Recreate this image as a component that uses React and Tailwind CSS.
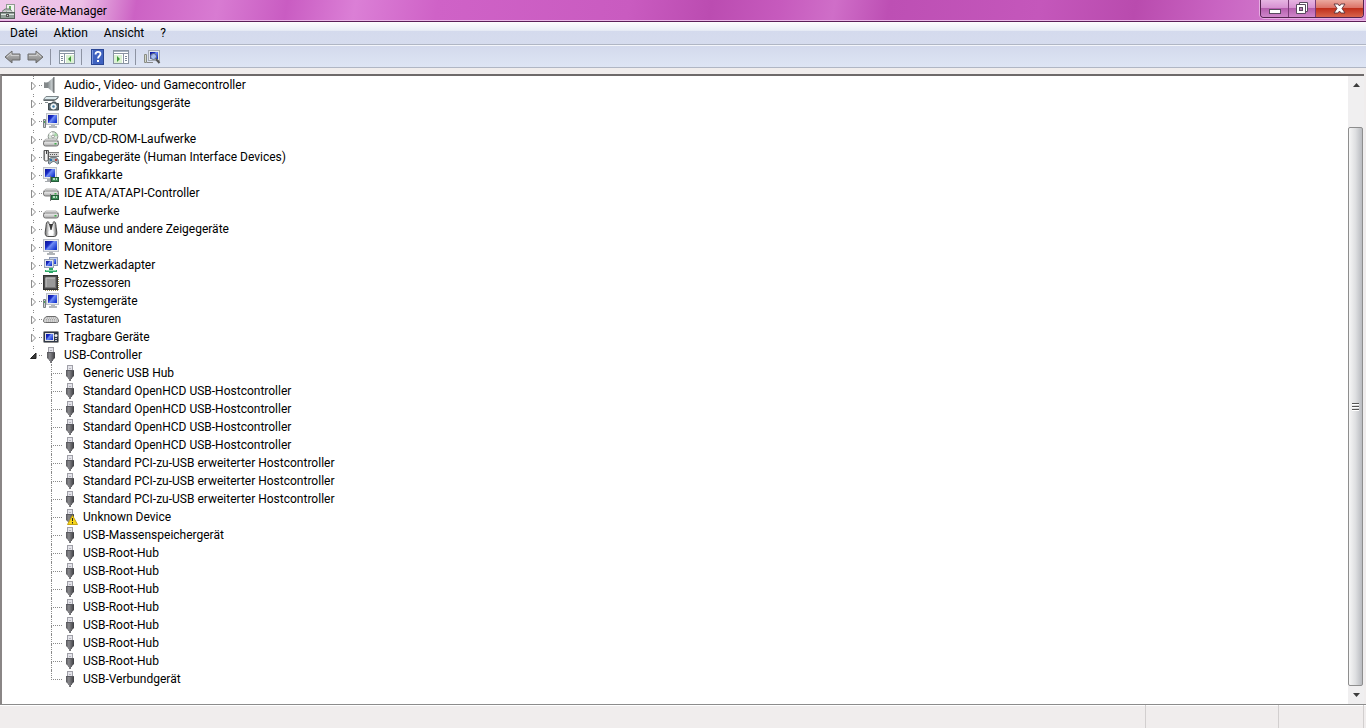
import React, { useState } from 'react';

const categories = [
  { name: 'Audio-, Video- und Gamecontroller', icon: 'audio' },
  { name: 'Bildverarbeitungsgeräte', icon: 'imaging' },
  { name: 'Computer', icon: 'computer' },
  { name: 'DVD/CD-ROM-Laufwerke', icon: 'dvd' },
  { name: 'Eingabegeräte (Human Interface Devices)', icon: 'hid' },
  { name: 'Grafikkarte', icon: 'display' },
  { name: 'IDE ATA/ATAPI-Controller', icon: 'ide' },
  { name: 'Laufwerke', icon: 'drive' },
  { name: 'Mäuse und andere Zeigegeräte', icon: 'mouse' },
  { name: 'Monitore', icon: 'monitor' },
  { name: 'Netzwerkadapter', icon: 'network' },
  { name: 'Prozessoren', icon: 'cpu' },
  { name: 'Systemgeräte', icon: 'computer' },
  { name: 'Tastaturen', icon: 'keyboard' },
  { name: 'Tragbare Geräte', icon: 'portable' },
  {
    name: 'USB-Controller',
    icon: 'usb',
    devices: [
      { name: 'Generic USB Hub' },
      { name: 'Standard OpenHCD USB-Hostcontroller' },
      { name: 'Standard OpenHCD USB-Hostcontroller' },
      { name: 'Standard OpenHCD USB-Hostcontroller' },
      { name: 'Standard OpenHCD USB-Hostcontroller' },
      { name: 'Standard PCI-zu-USB erweiterter Hostcontroller' },
      { name: 'Standard PCI-zu-USB erweiterter Hostcontroller' },
      { name: 'Standard PCI-zu-USB erweiterter Hostcontroller' },
      { name: 'Unknown Device', warning: true },
      { name: 'USB-Massenspeichergerät' },
      { name: 'USB-Root-Hub' },
      { name: 'USB-Root-Hub' },
      { name: 'USB-Root-Hub' },
      { name: 'USB-Root-Hub' },
      { name: 'USB-Root-Hub' },
      { name: 'USB-Root-Hub' },
      { name: 'USB-Root-Hub' },
      { name: 'USB-Verbundgerät' },
    ],
  },
];

const Gradients = () => (
  <svg className="absolute h-0 w-0" aria-hidden="true">
    <defs>
      <linearGradient id="screen" x1="0" y1="0" x2="1" y2="0.7">
        <stop offset="0" stopColor="#0a1490" />
        <stop offset="0.4" stopColor="#1a2cc8" />
        <stop offset="0.55" stopColor="#6f8cf4" />
        <stop offset="1" stopColor="#1838d0" />
      </linearGradient>
      <linearGradient id="metal" x1="0" y1="0" x2="0" y2="1">
        <stop offset="0" stopColor="#f6f6f6" />
        <stop offset="1" stopColor="#a9a9a9" />
      </linearGradient>
      <linearGradient id="plug" x1="0" y1="0" x2="1" y2="0">
        <stop offset="0" stopColor="#58585c" />
        <stop offset="0.35" stopColor="#88888c" />
        <stop offset="1" stopColor="#3c3c40" />
      </linearGradient>
      <linearGradient id="cone" x1="0" y1="0" x2="1" y2="0">
        <stop offset="0" stopColor="#7c8284" />
        <stop offset="0.7" stopColor="#c4cacc" />
        <stop offset="1" stopColor="#6c7072" />
      </linearGradient>
      <linearGradient id="mouseBody" x1="0" y1="0" x2="1" y2="0">
        <stop offset="0" stopColor="#6c6c6c" />
        <stop offset="0.35" stopColor="#f4f4f4" />
        <stop offset="0.65" stopColor="#f4f4f4" />
        <stop offset="1" stopColor="#606060" />
      </linearGradient>
      <linearGradient id="arrow" x1="0" y1="0" x2="0" y2="1">
        <stop offset="0" stopColor="#c4c4c4" />
        <stop offset="1" stopColor="#7e7e7e" />
      </linearGradient>
    </defs>
  </svg>
);

const Drive = ({ y = 7 }) => (
  <g>
    <path d={`M3 ${y}h10l3 2.5H0z`} fill="#ececec" stroke="#9a9a9a" strokeWidth="0.7" />
    <rect x="0.5" y={y + 2} width="15" height="5" rx="2" fill="url(#metal)" stroke="#777" />
    <rect x="11.5" y={y + 4} width="2" height="1.5" fill="#3fae4a" />
  </g>
);

const Card = () => (
  <g>
    <rect x="8.5" y="10.5" width="7" height="4" fill="#3c8f58" stroke="#245c38" />
    <rect x="10" y="11" width="2" height="2" fill="#b8dcc0" />
    <rect x="13" y="11" width="1" height="2" fill="#b8dcc0" />
    <path d="M7.5 9v7" stroke="#777" />
  </g>
);

const icons = {
  audio: (
    <g>
      <path d="M1 5h4v6H1z" fill="#85898b" />
      <path d="M4 6L11 0v16l-7-6z" fill="url(#cone)" />
      <path d="M1.5 5.5h3" stroke="#b8bcbe" />
      <path d="M11 0v16" stroke="#6a6e70" />
    </g>
  ),
  imaging: (
    <g>
      <path d="M.5 4.5L3 1.5h12.5L13 4.5z" fill="#dce9ec" stroke="#7e878b" />
      <path d="M.5 5.5h11l4-3" fill="none" stroke="#5e6669" />
      <path d="M5.5 8.5h3l1-1.5h3l1 1.5h2V15h-10z" fill="#5a6a72" stroke="#414b50" />
      <circle cx="10.5" cy="11.5" r="2.6" fill="#e6f1f6" stroke="#fff" />
      <circle cx="10.5" cy="11.5" r="1.2" fill="#3d78a0" />
      <path d="M2 7.5h3" stroke="#80898c" />
    </g>
  ),
  computer: (
    <g>
      <path d="M.5 6.5h2v8h-2z" fill="#c8ccd0" stroke="#7b8084" />
      <path d="M1 9h1" stroke="#4aa35a" strokeWidth="2" />
      <rect x="3.5" y="0.5" width="12" height="11" fill="#e8eaec" stroke="#bcc0c6" />
      <rect x="5" y="2" width="9" height="8" fill="url(#screen)" />
      <path d="M8 12h4v1h2v2H6v-2h2z" fill="#b4b8bc" />
    </g>
  ),
  dvd: (
    <g>
      <circle cx="10" cy="5.5" r="4.8" fill="#dbe6dc" stroke="#8a928b" />
      <path d="M10 5.5L12.5 1.5A5 5 0 0 1 14.5 5z" fill="#a8d8a8" />
      <path d="M10 5.5L6 3a5 5 0 0 1 3-2z" fill="#fff" />
      <circle cx="10" cy="5.5" r="1.4" fill="#fff" stroke="#888" strokeWidth="0.8" />
      <Drive y={8} />
    </g>
  ),
  hid: (
    <g>
      <path d="M1 1.5h4.5v9c0 2-4.5 2-4.5 0z" fill="url(#mouseBody)" stroke="#555" />
      <path d="M3.5 1v4" stroke="#444" />
      <path d="M6 3.5h10v4H6z" fill="#d8d8d8" />
      <path d="M6 3.5h10M6 7.5h10" stroke="#7e7e7e" />
      <path d="M7 5.5h8" stroke="#555" strokeDasharray="1 1" />
      <path d="M5.5 14.5c0-6 2-6 5-6s5 0 5 6c-2 1.5-2.5-2-5-2s-3 3.5-5 2z" fill="#a4b4bc" stroke="#59656c" />
      <rect x="7" y="10" width="2" height="2" fill="#2f75b0" />
      <rect x="12" y="10" width="2" height="2" fill="#b44" />
    </g>
  ),
  display: (
    <g>
      <rect x="0.5" y="0.5" width="13" height="11" fill="#e8eaec" stroke="#bcc0c6" />
      <rect x="2" y="2" width="10" height="8" fill="url(#screen)" />
      <path d="M4 12h3v3H2v-1h2z" fill="#a8acb0" />
      <Card />
    </g>
  ),
  ide: (
    <g>
      <Drive y={4} />
      <Card />
    </g>
  ),
  drive: <Drive y={8} />,
  mouse: (
    <g>
      <path
        d="M3.5 2C4.5 0 6 0 6 3l1 1h2l1-1c0-3 1.5-3 2.5-1 .6 2 .4 4 1 7 .7 3.5.5 6-2 6.500h-7c-2.500-.5-2.700-3-2-6.500.6-3 .4-5 1-7z"
        fill="url(#mouseBody)"
        stroke="#4b4b4b"
      />
      <path d="M6 3l1.5 6h1L10 3z" fill="#3a3a3a" />
      <ellipse cx="8" cy="11.5" rx="2.5" ry="2.5" fill="#fff" />
    </g>
  ),
  monitor: (
    <g>
      <rect x="0.5" y="0.5" width="15" height="12" fill="#e8eaec" stroke="#bcc0c6" />
      <rect x="2" y="2" width="12" height="9" fill="url(#screen)" />
      <path d="M6 13h4v1h2v2H4v-2h2z" fill="#b0b4b8" />
    </g>
  ),
  network: (
    <g>
      <rect x="6.5" y="0.5" width="8" height="8" fill="#c8d4ec" stroke="#8c98b4" />
      <rect x="8" y="2" width="5" height="5" fill="url(#screen)" />
      <rect x="1.5" y="2.5" width="9" height="8" fill="#dde3ee" stroke="#98a2b4" />
      <rect x="3" y="4" width="6" height="5" fill="url(#screen)" />
      <path d="M6 11h4v2h4v2h-4v1H6v-1H2v-2h4z" fill="#2fa868" />
      <path d="M3 13.5h10" stroke="#8fdcb0" />
    </g>
  ),
  cpu: (
    <g>
      <path d="M2 15.5h14M15.5 2v14" stroke="#9a9258" strokeDasharray="1 1" />
      <rect x="0.5" y="0.5" width="14" height="14" fill="#4c4c4c" stroke="#333" />
      <rect x="2.5" y="2.5" width="10" height="10" fill="#9a9a9a" stroke="#777" />
      <path d="M3 12V3h9" fill="none" stroke="#c6c6c6" />
    </g>
  ),
  keyboard: (
    <g>
      <path d="M4 5.5h8c2 0 3.5 3 3.5 4.5s-1 1.5-2 1.5h-11c-1 0-2 0-2-1.5S2 5.5 4 5.5z" fill="#d4d4d4" stroke="#6c6c6c" />
      <path d="M4 7h9M3 8.5h10.5M3 10h11" stroke="#a4a4a4" strokeDasharray="1 1" />
    </g>
  ),
  portable: (
    <g>
      <rect x="0.5" y="2.5" width="15" height="11" rx="1" fill="#303848" stroke="#8c8c8c" />
      <rect x="2.5" y="4.5" width="8" height="7" fill="url(#screen)" stroke="#e4e4e4" />
      <circle cx="13" cy="6.5" r="1.5" fill="#eee" />
      <path d="M12 9.5h2M12 11.5h2" stroke="#ccc" />
    </g>
  ),
  usb: (
    <g>
      <rect x="5.5" y="0.5" width="5" height="5" fill="#e4e4ea" stroke="#a0a0a8" />
      <path d="M7 3.5h2" stroke="#b4b4bc" />
      <path d="M4 5h8v6l-2 2v1H9v2H7v-2H6v-1l-2-2z" fill="url(#plug)" />
      <path d="M4 5.5h8" stroke="#5a5a60" />
    </g>
  ),
};

const DeviceIcon = ({ type, warning }) => (
  <svg viewBox="0 0 16 16" className="h-4 w-4 shrink-0" aria-hidden="true">
    {icons[type]}
    {warning && (
      <g>
        <path d="M10.5 6.5l5 9h-10z" fill="#f6d61c" stroke="#c8a410" strokeLinejoin="round" />
        <path d="M10.5 9v3M10.5 13v1.500" stroke="#222" />
      </g>
    )}
  </svg>
);

const Device = ({ device, last }) => (
  <li className="flex h-[18px] items-center pl-[49px]">
    <span className="flex h-full w-[11px] flex-col">
      <span className="h-[10px] w-full border-b border-l border-dotted border-[#8a8a8a]" />
      {!last && <span className="flex-1 border-l border-dotted border-[#8a8a8a]" />}
    </span>
    <DeviceIcon type="usb" warning={device.warning} />
    <span className="pl-[5px] whitespace-nowrap">{device.name}</span>
  </li>
);

const Category = ({ category }) => {
  const [open, setOpen] = useState(!!category.devices);

  return (
    <li>
      <div className="flex h-[18px] items-center pl-[27px]">
        <button
          className="flex h-full w-[9px] flex-col items-center"
          aria-label={category.name}
          aria-expanded={open}
          onClick={() => setOpen(!open)}
        >
          <span className="mb-0.5 h-[3px] border-l border-dotted border-[#8a8a8a]" />
          <svg viewBox="0 0 9 9" className="h-[9px] w-[9px]">
            {open ? (
              <path d="M7 2v5.5H1.5z" fill="#3a3a3a" stroke="#222" />
            ) : (
              <path d="M2.5 1L6.500 5l-4 4z" fill="#fff" stroke="#8c8c8c" />
            )}
          </svg>
        </button>
        <span className="mx-px w-[3px] border-b border-dotted border-[#8a8a8a]" />
        <DeviceIcon type={category.icon} />
        <span className="pl-[5px] whitespace-nowrap">{category.name}</span>
      </div>
      {open && category.devices && (
        <ul>
          {category.devices.map((device, i) => (
            <Device key={i} device={device} last={i === category.devices.length - 1} />
          ))}
        </ul>
      )}
    </li>
  );
};

const TitleBar = () => (
  <header className="flex h-[22px] items-start border-b border-[#5c1f58] bg-[linear-gradient(100deg,#eec9ea_0%,#ecbfe6_6%,#cc62c4_10%,#d87bd2_16%,#c95cc2_21%,#db7fd6_26%,#cf62c7_32%,#c95bc0_46%,#bb4cb1_52%,#c65abd_57%,#cf6ec8_61%,#bd4fb4_65%,#c457bb_76%,#b94bae_83%,#c964c2_89%,#dc94d8_100%)] shadow-[inset_0_-1px_0_#e9b6e6]">
    <svg viewBox="0 0 16 16" className="mt-1 h-4 w-4" aria-hidden="true">
      <rect x="6.5" y="0.5" width="8" height="9" fill="#f2f4f0" stroke="#8f9a90" />
      <path d="M10 2v5" stroke="#65ad60" strokeWidth="2" />
      <path d="M2 7.5L5 5h5l2 2.5" fill="#b9c2bd" stroke="#6e7872" />
      <rect x="0.5" y="8.5" width="14" height="6" fill="#93a099" stroke="#56605a" />
      <path d="M1 10.5h13" stroke="#dfe6e2" />
      <rect x="6.5" y="10.5" width="2" height="2" fill="#dcdcdc" stroke="#555" />
    </svg>
    <h1 className="flex-1 pt-0.5 pl-[5px] leading-[18px]">Geräte-Manager</h1>
    <div className="mr-0.5 flex h-[18px] overflow-hidden rounded-b-[4px] border border-t-0 border-[#54234f] shadow-[0_0_0_1px_#e7aee3]">
      <button
        aria-label="Minimieren"
        className="flex w-7 items-center justify-center border-r border-[#7a3b76] bg-[linear-gradient(#e6b5e2_0%,#d792d2_45%,#b55fae_50%,#cf86ca_100%)]"
      >
        <svg viewBox="0 0 13 13" className="h-[13px] w-[13px]">
          <rect x="1.5" y="7.5" width="11" height="4" fill="#fff" stroke="#5a4a60" />
        </svg>
      </button>
      <button
        aria-label="Verkleinern"
        className="flex w-[27px] items-center justify-center border-r border-[#7a3b76] bg-[linear-gradient(#e6b5e2_0%,#d792d2_45%,#b55fae_50%,#cf86ca_100%)]"
      >
        <svg viewBox="0 0 13 13" className="h-[13px] w-[13px]">
          <path d="M3.5.5h8v9h-8z" fill="#fff" stroke="#5a4a60" />
          <path d="M.5 2.5h9v9h-9z" fill="#fff" stroke="#5a4a60" />
          <rect x="3.5" y="5.5" width="3" height="3" fill="#b87bb4" stroke="#5a4a60" />
        </svg>
      </button>
      <button
        aria-label="Schließen"
        className="flex w-[47px] items-center justify-center bg-[linear-gradient(#eba99f_0%,#dc7468_45%,#c0301c_50%,#d8644c_100%)]"
      >
        <svg viewBox="0 0 13 13" className="h-[13px] w-[13px]">
          <path
            d="M1 2h4l1.5 2L8 2h4L9 6.500l3 4.500H8L6.500 9 5 11H1l3-4.500z"
            fill="#fff"
            stroke="#5a3038"
            strokeWidth="0.9"
          />
        </svg>
      </button>
    </div>
  </header>
);

const menuItems = ['Datei', 'Aktion', 'Ansicht', '?'];

const MenuBar = () => (
  <nav className="flex h-[23px] items-center gap-4 border-b border-[#b0b6c4] bg-[linear-gradient(#fdfdfe_0%,#e9edf6_38%,#d4daed_42%,#d6dcee_100%)] pl-[10px]">
    {menuItems.map((item) => (
      <button key={item} className="leading-[18px]">
        {item}
      </button>
    ))}
  </nav>
);

const NavArrow = ({ flip }) => (
  <svg viewBox="0 0 17 14" className={flip ? 'h-[14px] w-[17px] -scale-x-100' : 'h-[14px] w-[17px]'}>
    <path d="M1 7l7-6v3h8v6H8v3z" fill="url(#arrow)" stroke="#6c6c6c" strokeLinejoin="round" />
    <path d="M3 6.800L7 3.300v2.200h8" fill="none" stroke="#d6d6d6" strokeWidth="0.8" />
  </svg>
);

const PaneIcon = ({ flip }) => (
  <svg viewBox="0 0 16 14" className={flip ? 'h-[14px] w-4 -scale-x-100' : 'h-[14px] w-4'}>
    <rect x="0.5" y="0.5" width="15" height="13" fill="#fff" stroke="#8a95a2" />
    <path d="M1 1.5h14" stroke="#a7b3c2" />
    <path d="M1 3.5h14" stroke="#8a95a2" />
    <path d="M10 2.5h1M12 2.5h1" stroke="#fff" />
    <path d="M5.5 4v9.5" stroke="#8a95a2" />
    <path d="M2 6.5h2M2 8.5h2M2 10.5h2" stroke="#7c8a9a" />
    <rect x="7" y="5" width="8" height="8" fill="#dcf2d4" />
    <path d="M12 6v6L9 9z" fill="#3f9a3a" />
  </svg>
);

const Separator = () => <span className="h-4 w-px bg-[#8d93a2]" />;

const ToolBar = () => (
  <div
    role="toolbar"
    className="flex h-[23px] items-center border-b border-[#b0b6c4] bg-linear-to-b from-[#d3d9ec] to-[#dee5f4] pt-0.5 pl-1 shadow-[inset_0_1px_0_#f4f6fb]"
  >
    <button aria-label="Zurück" className="mr-1.5">
      <NavArrow />
    </button>
    <button aria-label="Vorwärts" className="mr-1.5">
      <NavArrow flip />
    </button>
    <Separator />
    <button aria-label="Konsolenstruktur" className="mr-1.5 ml-2">
      <PaneIcon />
    </button>
    <Separator />
    <button aria-label="Hilfe" className="mr-[9px] ml-[9px]">
      <svg viewBox="0 0 13 16" className="h-4 w-[13px]">
        <rect x="0.5" y="0.5" width="12" height="15" fill="#3f62c0" stroke="#2a4694" />
        <path d="M1.5 1v14" stroke="#7e9ade" />
        <path d="M4.5 5.500c0-3.500 5-3.500 5-.5 0 2-2.500 2-2.500 4.500" fill="none" stroke="#fff" strokeWidth="1.8" />
        <rect x="6" y="11" width="2" height="2" fill="#fff" />
      </svg>
    </button>
    <button aria-label="Aktionsbereich" className="mr-1.5">
      <PaneIcon flip />
    </button>
    <Separator />
    <button aria-label="Nach geänderter Hardware suchen" className="ml-2">
      <svg viewBox="0 0 17 16" className="h-4 w-[17px]">
        <path d="M.5 5.5h2v8h-2z" fill="#d4d8c8" stroke="#8a8c84" />
        <rect x="4.5" y="1.5" width="11" height="10" fill="#e4e8ee" stroke="#a4aab4" />
        <rect x="6" y="3" width="8" height="7" fill="url(#screen)" />
        <path d="M3 13.5h6" stroke="#888" />
        <circle cx="9.5" cy="7.5" r="3" fill="#c8dcf4" fillOpacity="0.7" stroke="#5d6878" />
        <path d="M12 10l3.5 4" stroke="#555" strokeWidth="2" />
      </svg>
    </button>
  </div>
);

const ScrollBar = () => (
  <div className="flex w-4 flex-col bg-[#f0eff0]">
    <button aria-label="Nach oben" className="flex h-[17px] items-center justify-center">
      <svg viewBox="0 0 7 4" className="h-1 w-[7px]">
        <path d="M0 4l3.5-4L7 4z" fill="#3c3c3c" />
      </svg>
    </button>
    <div className="h-[34px]" />
    <div className="mr-px flex flex-1 items-center justify-center rounded-xs border border-[#8e8e8e] bg-linear-to-r from-[#f6f6f6] via-[#dedfe1] to-[#b9bbc0]">
      <svg viewBox="0 0 7 8" className="h-2 w-[7px]">
        <path d="M0 .5h7M0 3.5h7M0 6.5h7" stroke="#555" />
        <path d="M0 1.5h7M0 4.5h7M0 7.5h7" stroke="#fff" />
      </svg>
    </div>
    <button aria-label="Nach unten" className="flex h-[18px] items-center justify-center">
      <svg viewBox="0 0 7 4" className="h-1 w-[7px]">
        <path d="M0 0h7L3.5 4z" fill="#3c3c3c" />
      </svg>
    </button>
  </div>
);

const App = () => {
  return (
    <div className="flex min-h-screen flex-col bg-[#f0eded] font-['Roboto','Open_Sans',sans-serif] text-[12px] text-black">
      <Gradients />
      <TitleBar />
      <MenuBar />
      <ToolBar />
      <main className="mt-1.5 mr-0.5 flex flex-1 border-t-2 border-l-2 border-t-[#6e6a6a] border-l-[#8a8686] bg-white">
        <ul className="flex-1 leading-[18px]">
          {categories.map((category) => (
            <Category key={category.name} category={category} />
          ))}
        </ul>
        <ScrollBar />
      </main>
      <footer className="flex h-6 border-t border-[#8c8c8c] pr-0.5 shadow-[inset_0_1px_0_#fff]">
        <div className="flex-1 border-r border-[#d2cfcf]" />
        <div className="w-[133px] border-r border-[#d2cfcf]" />
        <div className="w-[85px] border-r border-[#d2cfcf]" />
      </footer>
    </div>
  );
};

export default App;
